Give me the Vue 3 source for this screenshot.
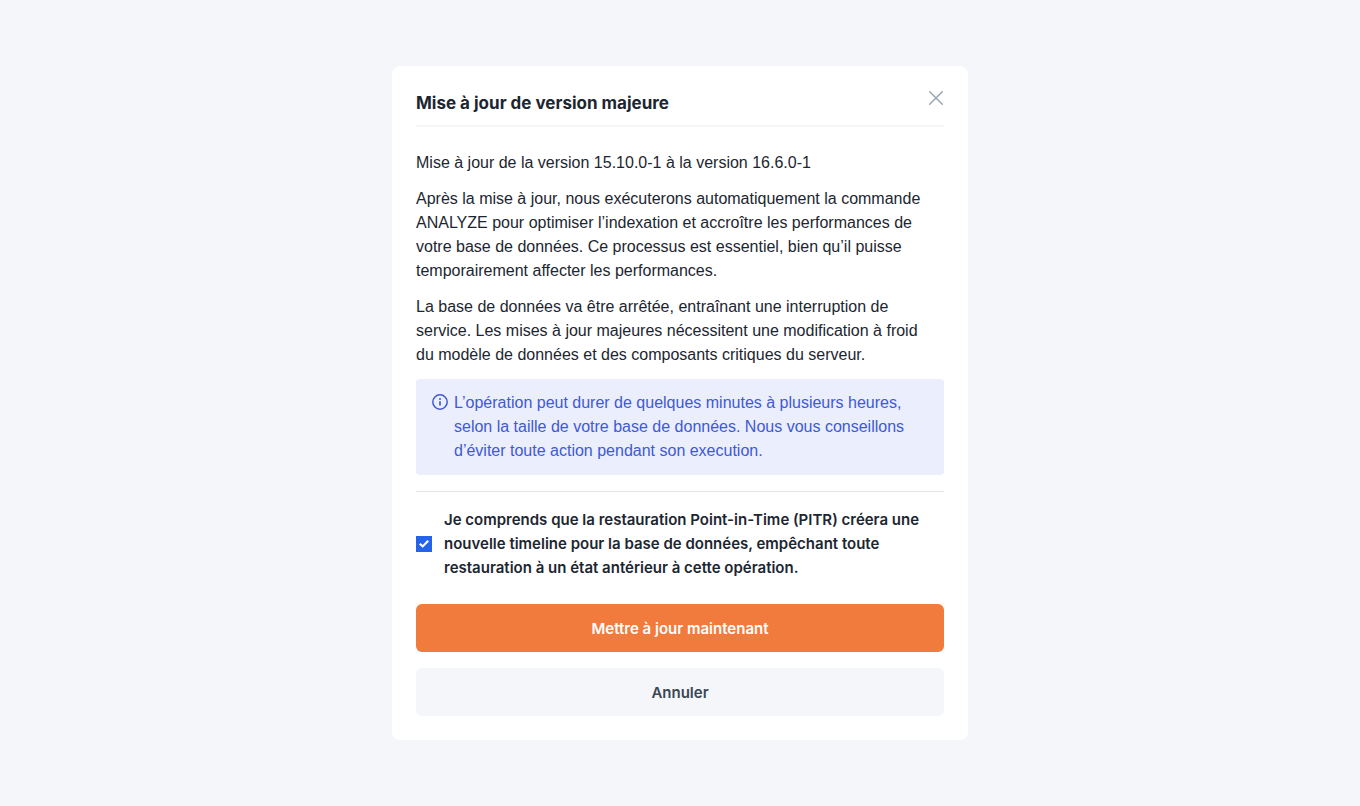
<script setup>
import { ref } from 'vue'

const accepted = ref(true)
</script>

<template>
  <main class="page">
    <section class="modal" role="dialog" aria-labelledby="modal-title">
      <header class="modal-header">
        <h1 id="modal-title">Mise à jour de version majeure</h1>
        <button class="close" type="button" aria-label="Fermer">
          <svg width="16" height="16" viewBox="0 0 16 16" fill="none" stroke="currentColor" stroke-width="1.5" stroke-linecap="round">
            <path d="M1.7 1.7l12.6 12.6M14.3 1.7l-12.6 12.6" />
          </svg>
        </button>
      </header>

      <div class="modal-body">
        <p>Mise à jour de la version 15.10.0-1 à la version 16.6.0-1</p>
        <p>
          Après la mise à jour, nous exécuterons automatiquement la commande
          ANALYZE pour optimiser l’indexation et accroître les performances de
          votre base de données. Ce processus est essentiel, bien qu’il puisse
          temporairement affecter les performances.
        </p>
        <p>
          La base de données va être arrêtée, entraînant une interruption de
          service. Les mises à jour majeures nécessitent une modification à froid
          du&nbsp;modèle de données et des composants critiques du serveur.
        </p>
        <div class="notice">
          <svg class="notice-icon" width="16" height="16" viewBox="0 0 16 16" fill="none">
            <circle cx="8" cy="8" r="7.2" stroke="currentColor" stroke-width="1.5" />
            <path d="M8 7.2v4.2" stroke="currentColor" stroke-width="1.7" />
            <circle cx="8" cy="5" r="1" fill="currentColor" />
          </svg>
          <p>
            L’opération peut durer de quelques minutes à plusieurs heures,
            selon la taille de votre base de données. Nous vous conseillons
            d’éviter toute action pendant son execution.
          </p>
        </div>
      </div>

      <div class="consent">
        <input id="consent" v-model="accepted" type="checkbox" />
        <label for="consent">
          Je comprends que la restauration Point-in-Time (PITR) créera une
          nouvelle timeline pour la base de données, empêchant toute
          restauration à un état antérieur à cette opération.
        </label>
      </div>

      <div class="actions">
        <button class="btn primary" type="button">Mettre à jour maintenant</button>
        <button class="btn secondary" type="button">Annuler</button>
      </div>
    </section>
  </main>
</template>

<style>
body {
  margin: 0;
  background: #f5f6fa;
}
</style>

<style scoped>
.page {
  display: flex;
  align-items: center;
  justify-content: center;
  min-height: 100vh;
  box-sizing: border-box;
  padding: 24px;
  background: #f5f6fa;
  color: #1c2630;
  font-family: "Liberation Sans", sans-serif;
  font-size: 16px;
  line-height: 24px;
}

.modal {
  width: 100%;
  max-width: 576px;
  box-sizing: border-box;
  padding: 24px;
  border-radius: 8px;
  background: #fff;
}

.modal-header {
  display: flex;
  justify-content: space-between;
  align-items: flex-start;
  padding-bottom: 9px;
  border-bottom: 2px solid #f5f6f8;
}

h1 {
  margin: 0;
  font-family: Inter, "Liberation Sans", sans-serif;
  font-size: 17px;
  font-weight: 700;
  line-height: 26px;
}

.close {
  display: flex;
  padding: 0;
  border: 0;
  background: none;
  color: #9aa7b3;
  cursor: pointer;
}

.modal-body {
  display: flex;
  flex-direction: column;
  gap: 12px;
  padding: 24px 0 16px;
  border-bottom: 1px solid #e2e4e7;
}

p {
  margin: 0;
}

.notice {
  display: flex;
  gap: 6px;
  padding: 12px 16px;
  border-radius: 4px;
  background: #eaeefd;
  color: #4059d6;
}

.notice-icon {
  flex: none;
  margin-top: 3px;
}

.consent {
  display: flex;
  align-items: center;
  gap: 12px;
  padding: 16px 0 24px;
  font-family: Inter, "Liberation Sans", sans-serif;
  font-size: 15px;
  font-weight: 600;
}

.consent input {
  flex: none;
  appearance: none;
  display: grid;
  place-items: center;
  width: 16px;
  height: 16px;
  margin: 0;
  border: 1px solid #2563eb;
  background: #fff;
}

.consent input:checked {
  background: #2563eb;
}

.consent input:checked::before {
  content: "";
  width: 10px;
  height: 8px;
  background: #fff;
  clip-path: polygon(0 55%, 15% 37%, 37% 62%, 84% 0, 100% 18%, 38% 98%);
}

.actions {
  display: flex;
  flex-direction: column;
  gap: 16px;
}

.btn {
  height: 48px;
  border: 0;
  border-radius: 6px;
  font-family: Inter, "Liberation Sans", sans-serif;
  font-size: 15px;
  font-weight: 600;
  cursor: pointer;
}

.primary {
  background: #f17b3d;
  color: #fff;
}

.secondary {
  background: #f5f6fa;
  color: #3a4754;
}
</style>
